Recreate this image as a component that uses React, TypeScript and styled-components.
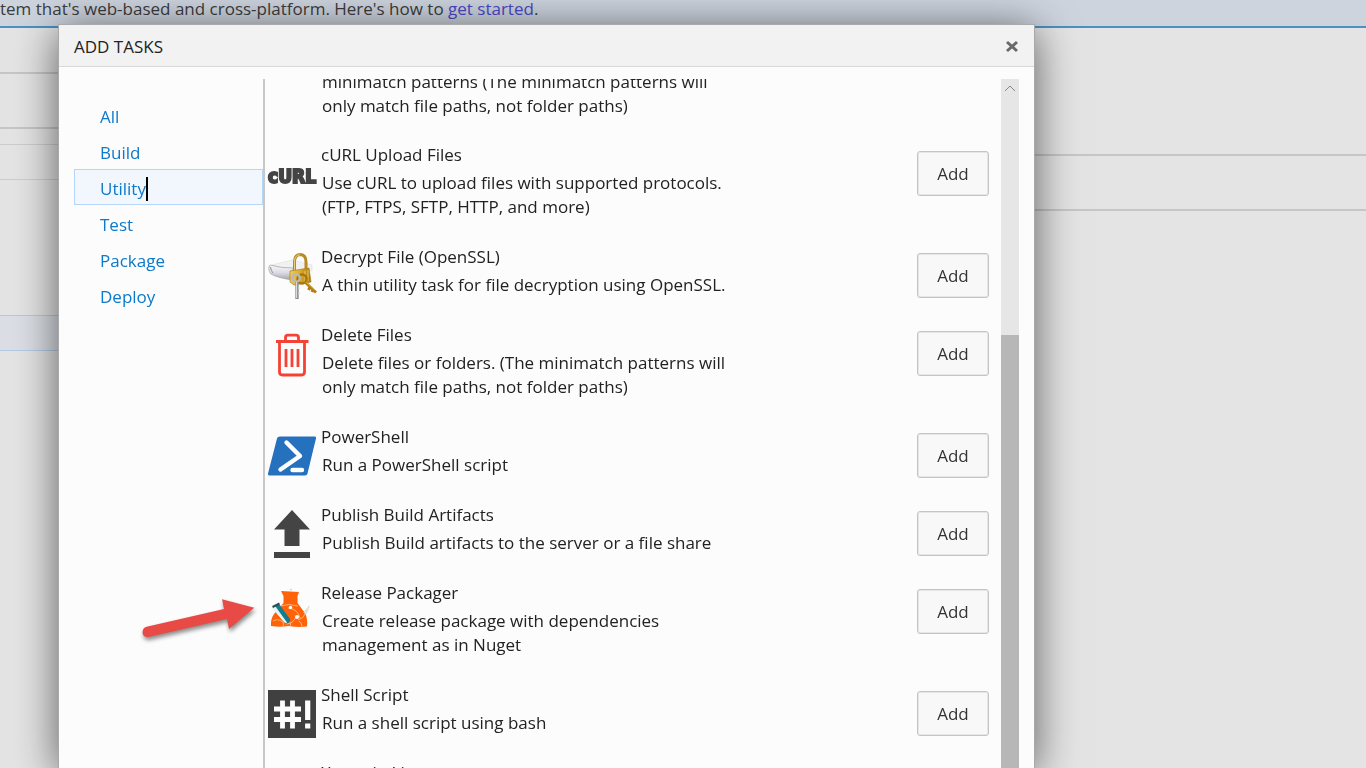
import React from 'react';
import styled, { createGlobalStyle } from 'styled-components';

const GlobalStyle = createGlobalStyle`
  *, *::before, *::after { box-sizing: border-box; }
  body {
    margin: 0;
    overflow: hidden;
    background: #e4e4e4;
    color: #222;
    font-family: "Open Sans", "Noto Sans", sans-serif;
    font-size: 17px;
    line-height: 24px;
  }
  h2, h3, p, ul { margin: 0; padding: 0; font-size: inherit; font-weight: 400; }
  ul { list-style: none; }
`;

const Page = styled.div`
  display: flex;
  flex-direction: column;
  height: 100vh;
  overflow: hidden;
`;

const Banner = styled.div`
  flex: none;
  height: 28px;
  padding-bottom: 5px;
  display: flex;
  align-items: flex-end;
  background: #cdd4de;
  border-bottom: 2px solid #4a91c4;
  color: #3c3c3c;
  white-space: nowrap;
`;

const BannerLink = styled.a`
  color: #4a48c8;
  text-decoration: none;
`;

const Workspace = styled.div`
  flex: 1;
  display: grid;
  grid-template-columns: 300px 1fr;
`;

const Column = styled.div`
  display: flex;
  flex-direction: column;
`;

const Strip = styled.div<{ $height: number; $soft?: boolean }>`
  height: ${(p) => p.$height}px;
  border-bottom: ${(p) => (p.$soft ? '1px solid #cdcdcd' : '2px solid #c6c6c6')};
`;

const Gap = styled.div`
  height: 135px;
`;

const SelectedStrip = styled.div`
  height: 36px;
  background: #dbdfe5;
  border: solid #b4cae4;
  border-width: 1px 0;
`;

const Overlay = styled.div`
  position: fixed;
  inset: 0;
  display: flex;
  padding: 24px 331px 0 58px;
`;

const Dialog = styled.section`
  flex: 1;
  min-width: 0;
  display: flex;
  flex-direction: column;
  background: #fcfcfc;
  border: 1px solid #a9a9a9;
  border-bottom: 0;
  box-shadow: 0 6px 40px rgba(0, 0, 0, 0.6);
`;

const DialogHeader = styled.header`
  flex: none;
  height: 42px;
  padding: 3px 15px 0;
  display: flex;
  align-items: center;
  justify-content: space-between;
  background: #f2f2f2;
  border-bottom: 1px solid #d8d8d8;
`;

const DialogTitle = styled.h2`
  font-size: 17px;
`;

const CloseButton = styled.button`
  display: flex;
  padding: 0;
  border: 0;
  background: none;
`;

const DialogBody = styled.div`
  flex: 1;
  min-height: 0;
  display: flex;
  padding: 12px 15px 0;
`;

const Categories = styled.nav`
  flex: none;
  width: 191px;
  padding-top: 18px;
  border-right: 2px solid #c8c8c8;
`;

const CategoryLink = styled.a<{ $active?: boolean }>`
  display: flex;
  height: 36px;
  padding: 7px 25px 0;
  border: 1px solid ${(p) => (p.$active ? '#b5d5fb' : 'transparent')};
  background: ${(p) => (p.$active ? '#f2f7fe' : 'transparent')};
  color: #0b79cc;
  text-decoration: none;
`;

const Caret = styled.span`
  width: 2px;
  height: 24px;
  background: #000;
`;

const TaskList = styled.ul`
  flex: 1;
  min-width: 0;
  overflow: hidden;
  padding: 0 12px 0 3px;
`;

const TaskRow = styled.li`
  display: flex;
  align-items: flex-start;
  gap: 5px;
  padding-bottom: 26px;
`;

const TrailingRow = styled.li`
  margin-top: -9px;
  padding: 0 0 25px 53px;
`;

const TaskText = styled.div`
  flex: 1;
  min-width: 0;
`;

const TaskDescription = styled.p`
  max-width: 420px;
  padding: 4px 0 0 1px;
`;

const ClippedDescription = styled.p`
  max-width: 420px;
  padding-left: 1px;
`;

const IconSvg = styled.svg`
  flex: none;
  width: 48px;
  height: 48px;
  margin: 8px 0 -8px;
  overflow: visible;
`;

const AddButton = styled.button`
  flex: none;
  width: 72px;
  height: 45px;
  margin: 8px 0 -8px;
  padding: 0;
  border: 1px solid #c4c4c4;
  border-radius: 3px;
  background: #f8f8f8;
  box-shadow: inset 0 0 0 1px #e6e6e6;
  color: #333;
  font: inherit;
`;

const ScrollTrack = styled.div`
  flex: none;
  display: flex;
  flex-direction: column;
  width: 18px;
  background: #e6e6e6;
`;

const ScrollUp = styled.button`
  height: 18px;
  padding: 0;
  border: 0;
  background: none;
  display: flex;
  align-items: center;
  justify-content: center;
`;

const ScrollThumb = styled.div`
  flex: 1;
  margin-top: 238px;
  background: #b7b7b7;
`;

const Pointer = styled.svg`
  position: absolute;
  left: 136px;
  top: 592px;
  width: 126px;
  height: 60px;
  filter: drop-shadow(1px 3px 2px rgba(0, 0, 0, 0.45));
`;

const CurlIcon = () => (
  <IconSvg viewBox="0 0 48 48" aria-hidden="true">
    <text
      x="0"
      y="32"
      fill="#444"
      stroke="#444"
      strokeWidth="2"
      fontFamily="DejaVu Sans Condensed, DejaVu Sans"
      fontWeight="700"
      fontSize="19"
    >
      cURL
    </text>
  </IconSvg>
);

const LockIcon = () => (
  <IconSvg viewBox="0 0 48 48" aria-hidden="true">
    <defs>
      <linearGradient id="scroll" x1="0" y1="0" x2="0" y2="1">
        <stop offset="0" stopColor="#f8f8fa" />
        <stop offset="0.5" stopColor="#dcdce4" />
        <stop offset="1" stopColor="#a3a3a8" />
      </linearGradient>
      <linearGradient id="brass" x1="0" y1="0" x2="1" y2="0">
        <stop offset="0" stopColor="#f0cd62" />
        <stop offset="0.5" stopColor="#dba928" />
        <stop offset="1" stopColor="#a97710" />
      </linearGradient>
    </defs>
    <path d="M4 12L24 7L44 12V18L24 17Z" fill="#f1f1f1" stroke="#dedede" strokeWidth="0.6" />
    <path d="M2 12Q12 15 25 15V27Q10 25 3 21Q-1 16 2 12Z" fill="url(#scroll)" stroke="#aaa" strokeWidth="0.8" />
    <path d="M2.500 14Q3 18 5 20" fill="none" stroke="#8e8e94" />
    <path d="M26.500 20V8Q27 1.500 32.500 1.500Q38 2 38 9V18" fill="none" stroke="#b88a24" strokeWidth="3" />
    <path d="M26.500 18V8Q27 2 32 1.800" fill="none" stroke="#e9cf80" strokeWidth="1" />
    <path d="M22 18L41 15L43 29L26 32L22 29Z" fill="url(#brass)" stroke="#ad7e18" strokeWidth="0.7" />
    <path d="M37 18V29M40 17V28" stroke="#f5dc83" strokeWidth="0.8" />
    <circle cx="34" cy="26" r="4.500" fill="none" stroke="#a97508" strokeWidth="2.400" />
    <path d="M37 29L48 39.500M42 34L40.500 37M45 36L44 39" stroke="#b57d0c" strokeWidth="2.800" />
    <path d="M38 29L47 37" stroke="#edc04a" strokeWidth="0.8" />
    <circle cx="28" cy="25" r="3.800" fill="none" stroke="#b9b9b9" strokeWidth="2.400" />
    <path d="M29 29V46" stroke="#8f8f8f" strokeWidth="3.400" />
    <path d="M28.500 29V45M30 35H32M30 40H32" stroke="#d9d9d9" strokeWidth="1.200" />
  </IconSvg>
);

const TrashIcon = () => (
  <IconSvg viewBox="0 0 48 48" aria-hidden="true" fill="none" stroke="#f44336" strokeWidth="2.800">
    <path d="M8 10.500H40.500M17.500 10V6.500Q17.500 4.200 20 4.200H28Q30.500 4.200 30.500 6.500V10" />
    <path d="M11.500 11V41Q11.500 44 14.500 44H33.500Q36.500 44 36.500 41V11" />
    <path d="M18 18V36M24 18V36M30 18V36" />
  </IconSvg>
);

const PowerShellIcon = () => (
  <IconSvg viewBox="0 0 48 48" aria-hidden="true">
    <path
      d="M12 3.500H46.500Q48.500 3.500 48 5.500L39.500 40.500Q39 42.500 37 42.500H1.500Q-0.500 42.500 0 40.500L9 5.500Q9.500 3.500 12 3.500Z"
      fill="#2671be"
    />
    <g fill="none" stroke="#fff" strokeWidth="4.400" strokeLinecap="round">
      <path d="M18.500 9.500L32 23L12.500 36.500" strokeLinejoin="round" />
      <path d="M24.500 37H34" />
    </g>
  </IconSvg>
);

const PublishIcon = () => (
  <IconSvg viewBox="0 0 48 48" aria-hidden="true" fill="#444">
    <path d="M24 -1L42 18.500H31.500V35H16.500V18.500H6Z" />
    <rect x="6" y="41" width="36" height="6" />
  </IconSvg>
);

const FlaskIcon = () => (
  <IconSvg viewBox="0 0 48 48" aria-hidden="true">
    <path d="M13 2L31 3L29.500 7V14L37 24Q40 30 39 37.500Q30 38.500 21 37Q12 38.500 3 37Q2.500 30 6 25L15.500 14V7Z" fill="#ff6208" />
    <g fill="none" stroke="#ffb98a" strokeWidth="0.9">
      <path d="M12 17Q21 14 30 17M20 19Q30 20 32 29M18 35Q25 35 28 28M5 32Q10 29 15 33Q16 35 15 38M30 31Q36 29 37 25M31 32Q34 34 34 38M22 33L23 38" />
    </g>
    <path d="M5 18.500L11 15L22 30Q22.500 33.500 19 34.500Q17 34.500 15.500 32Z" fill="#127d8c" />
    <path d="M4 19L7.500 17.500L19 33.500Q18 35 15.500 32.500Z" fill="#e5f4f4" />
    <path d="M4.500 18L11.500 14.500" stroke="#304b54" strokeWidth="2" />
    <circle cx="22.500" cy="18.500" r="1.700" fill="#fff" />
    <circle cx="29" cy="28" r="2" fill="#fff" />
    <circle cx="23" cy="0.500" r="1" fill="#d9d9c9" />
    <path d="M36 24L39 20M38 25L41 17" stroke="#deded2" strokeWidth="1.500" />
  </IconSvg>
);

const ShellIcon = () => (
  <IconSvg viewBox="0 0 48 48" aria-hidden="true">
    <rect y="-1" width="48" height="48" fill="#404040" />
    <path d="M14.500 9.500V37.500M24.500 9.500V37.500M6 18H33M6 28.500H33" stroke="#fff" strokeWidth="4.800" />
    <path d="M39.700 9.500V29M39.700 32.500V37.500" stroke="#fff" strokeWidth="5.200" />
  </IconSvg>
);

const categories = ['All', 'Build', 'Utility', 'Test', 'Package', 'Deploy'];
const activeCategory = 'Utility';

type Task = { title: string; description: string; Icon: React.FC };

const BlankIcon = () => <IconSvg viewBox="0 0 48 48" aria-hidden="true" />;

const tasks: Task[] = [
  {
    title: 'cURL Upload Files',
    description: 'Use cURL to upload files with supported protocols. (FTP, FTPS, SFTP, HTTP, and more)',
    Icon: CurlIcon,
  },
  {
    title: 'Decrypt File (OpenSSL)',
    description: 'A thin utility task for file decryption using OpenSSL.',
    Icon: LockIcon,
  },
  {
    title: 'Delete Files',
    description: 'Delete files or folders. (The minimatch patterns will only match file paths, not folder paths)',
    Icon: TrashIcon,
  },
  { title: 'PowerShell', description: 'Run a PowerShell script', Icon: PowerShellIcon },
  {
    title: 'Publish Build Artifacts',
    description: 'Publish Build artifacts to the server or a file share',
    Icon: PublishIcon,
  },
  {
    title: 'Release Packager',
    description: 'Create release package with dependencies management as in Nuget',
    Icon: FlaskIcon,
  },
  { title: 'Shell Script', description: 'Run a shell script using bash', Icon: ShellIcon },
];

export default function App() {
  return (
    <>
      <GlobalStyle />
      <Page>
        <Banner>
          <span>
            tem that's web-based and cross-platform. Here's how to{' '}
            <BannerLink href="#get-started">get started</BannerLink>.
          </span>
        </Banner>
        <Workspace>
          <Column>
            <Strip $height={46} />
            <Strip $height={55} />
            <Strip $height={16} $soft />
            <Strip $height={35} $soft />
            <Gap />
            <SelectedStrip />
          </Column>
          <Column>
            <Strip $height={128} />
            <Strip $height={55} />
          </Column>
        </Workspace>
      </Page>

      <Overlay>
        <Dialog role="dialog" aria-labelledby="dialog-title">
          <DialogHeader>
            <DialogTitle id="dialog-title">ADD TASKS</DialogTitle>
            <CloseButton type="button" aria-label="Close">
              <svg width="14" height="16" viewBox="0 0 14 16">
                <path d="M2 3L12 12M12 3L2 12" stroke="#6a6a6a" strokeWidth="3" />
              </svg>
            </CloseButton>
          </DialogHeader>
          <DialogBody>
            <Categories aria-label="Task categories">
              {categories.map((name) => (
                <CategoryLink key={name} href={`#${name.toLowerCase()}`} $active={name === activeCategory}>
                  {name}
                  {name === activeCategory && <Caret />}
                </CategoryLink>
              ))}
            </Categories>
            <TaskList>
              <TrailingRow>
                <ClippedDescription>
                  minimatch patterns (The minimatch patterns will only match file paths, not folder paths)
                </ClippedDescription>
              </TrailingRow>
              {tasks.map(({ title, description, Icon }) => (
                <TaskRow key={title}>
                  <Icon />
                  <TaskText>
                    <h3>{title}</h3>
                    <TaskDescription>{description}</TaskDescription>
                  </TaskText>
                  <AddButton type="button" aria-label={`Add ${title}`}>Add</AddButton>
                </TaskRow>
              ))}
              <TaskRow>
                <BlankIcon />
                <TaskText>
                  <h3>Xamarin License</h3>
                </TaskText>
              </TaskRow>
            </TaskList>
            <ScrollTrack>
              <ScrollUp type="button" aria-label="Scroll up">
                <svg width="12" height="8" viewBox="0 0 12 8">
                  <path d="M1 7L6 2L11 7" fill="none" stroke="#888" />
                </svg>
              </ScrollUp>
              <ScrollThumb />
            </ScrollTrack>
          </DialogBody>
        </Dialog>
        <Pointer viewBox="0 0 126 60" aria-hidden="true">
          <path
            d="M10.500 34.700L88 17L86 7.300L118.300 15.700L93 37L91 27L12.500 45Q7 45.500 6.500 40.500Q6.500 36 10.500 34.700Z"
            fill="#e84a45"
          />
        </Pointer>
      </Overlay>
    </>
  );
}
